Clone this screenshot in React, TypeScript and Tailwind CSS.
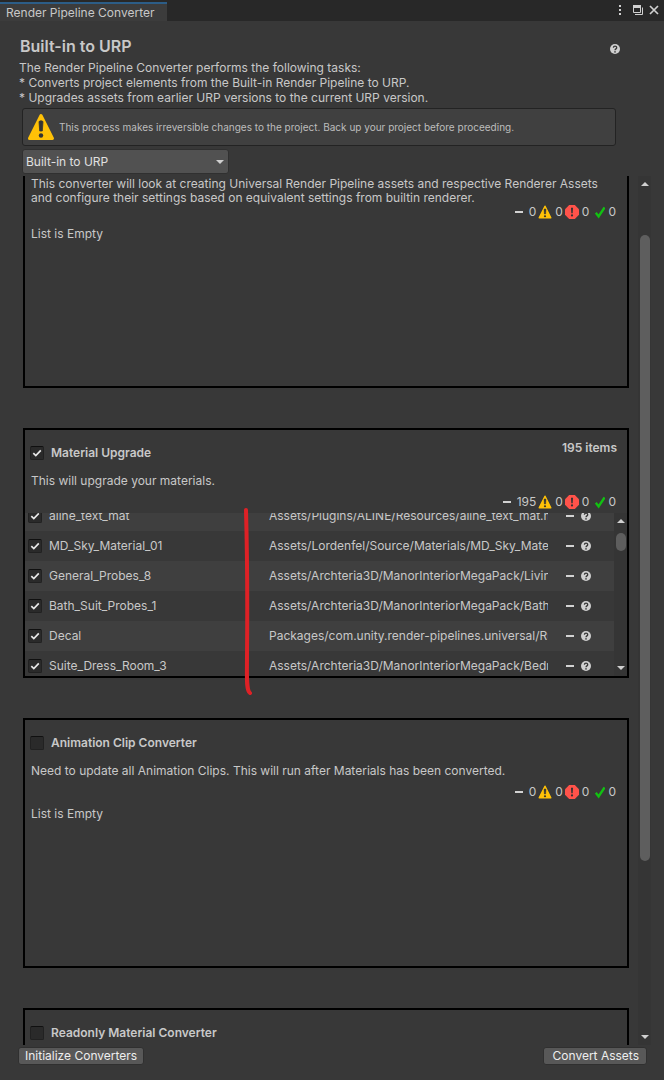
import React, { useLayoutEffect, useRef, useState } from 'react';

interface ConverterItem {
  name: string;
  path: string;
}

const materialItems: ConverterItem[] = [
  { name: 'aline_text_mat', path: 'Assets/Plugins/ALINE/Resources/aline_text_mat.mat' },
  { name: 'MD_Sky_Material_01', path: 'Assets/Lordenfel/Source/Materials/MD_Sky_Material_01.mat' },
  { name: 'General_Probes_8', path: 'Assets/Archteria3D/ManorInteriorMegaPack/Living' },
  { name: 'Bath_Suit_Probes_1', path: 'Assets/Archteria3D/ManorInteriorMegaPack/Bath' },
  { name: 'Decal', path: 'Packages/com.unity.render-pipelines.universal/Runtime' },
  { name: 'Suite_Dress_Room_3', path: 'Assets/Archteria3D/ManorInteriorMegaPack/Bedroom' },
];

const DashIcon = () => (
  <svg viewBox="0 0 14 14" className="size-3.5 shrink-0">
    <rect x="3" y="6" width="8" height="2" fill="#d2d2d2" />
  </svg>
);

const WarningIcon = ({ className }: { className: string }) => (
  <svg viewBox="0 0 28 28" className={className}>
    <path d="M14 2.5 25.5 25.5h-23Z" fill="#ffc107" stroke="#ffc107" strokeWidth="3" strokeLinejoin="round" />
    <path d="M12 8.5q2-1.6 4 0l-.7 9.500h-2.600Z" fill="#333" stroke="#333" strokeWidth=".8" />
    <circle cx="14" cy="22.500" r="2.200" fill="#333" />
  </svg>
);

const ErrorIcon = () => (
  <svg viewBox="0 0 14 14" className="size-3.5 shrink-0">
    <path d="M4.200 0h5.600L14 4.200v5.600L9.800 14H4.200L0 9.800V4.200Z" fill="#ff534a" />
    <path d="M6 2.800h2l-.3 5.400H6.300Z" fill="#333" />
    <circle cx="7" cy="10.400" r="1.100" fill="#333" />
  </svg>
);

const SuccessIcon = () => (
  <svg viewBox="0 0 14 14" className="size-3.5 shrink-0">
    <path d="M4.800 7.800 7.600 11.400 13.600 2.400" fill="none" stroke="#12c012" strokeWidth="2.400" />
  </svg>
);

const HelpIcon = () => (
  <svg viewBox="0 0 10 10" className="size-2.5 shrink-0">
    <circle cx="5" cy="5" r="5" fill="#d0d0d0" />
    <path d="M3.400 3.800C3.400 1.700 6.700 1.700 6.700 3.700 6.700 4.900 5 4.900 5 6.300" fill="none" stroke="#383838" strokeWidth="1.300" />
    <circle cx="5" cy="7.900" r=".8" fill="#383838" />
  </svg>
);

const Arrow = ({ up = false }: { up?: boolean }) => (
  <svg viewBox="0 0 8 4" className="h-1 w-2">
    <path d={up ? 'M0 4 4 0 8 4Z' : 'M0 0h8L4 4Z'} fill="#d0d0d0" />
  </svg>
);

const Checkbox = ({ label, defaultChecked = false }: { label: string; defaultChecked?: boolean }) => {
  const [checked, setChecked] = useState(defaultChecked);
  return (
    <span className="grid size-3.5 shrink-0">
      <input
        type="checkbox"
        aria-label={label}
        checked={checked}
        onChange={(e) => setChecked(e.target.checked)}
        className="col-start-1 row-start-1 size-3.5 appearance-none rounded-xs border border-[#212121] border-t-[#101010] bg-[#2a2a2a]"
      />
      {checked && (
        <svg viewBox="0 0 14 14" className="pointer-events-none col-start-1 row-start-1 size-3.5">
          <path d="M3.300 7.200 5.800 9.600 10.800 4.400" fill="none" stroke="#e8e8e8" strokeWidth="1.700" />
        </svg>
      )}
    </span>
  );
};

const Stats = ({ pending }: { pending: number }) => (
  <div className="mb-1 flex h-3.5 items-center justify-end gap-[2px] pr-[11px]">
    <span className="flex items-center gap-[3px]"><DashIcon />{pending}</span>
    <span className="flex items-center gap-[3px]"><WarningIcon className="size-3.5" />0</span>
    <span className="flex items-center gap-[3px]"><ErrorIcon />0</span>
    <span className="flex items-center gap-[3px]"><SuccessIcon />0</span>
  </div>
);

interface ConverterCardProps {
  title?: string;
  description: string;
  pending?: number;
  count?: string;
  checked?: boolean;
  children?: React.ReactNode;
}

const ConverterCard = ({ title, description, pending = 0, count, checked, children }: ConverterCardProps) => (
  <section className="relative flex h-[250px] shrink-0 flex-col border-2 border-black">
    <div className="flex h-9 items-start justify-between pl-[5px] pr-2.5 pt-[11px] font-semibold">
      {title && (
        <div className="flex items-center gap-[7px] pt-[5px]">
          <Checkbox label={title} defaultChecked={checked} />
          <h2>{title}</h2>
        </div>
      )}
      {count && <span>{count}</span>}
    </div>
    <div className="flex h-[29px] items-center pl-1.5 pr-5">
      <p>{description}</p>
    </div>
    <Stats pending={pending} />
    {children ?? <p className="pl-1.5 pt-1">List is Empty</p>}
  </section>
);

const ItemList = ({ items }: { items: ConverterItem[] }) => {
  const listRef = useRef<HTMLUListElement>(null);

  useLayoutEffect(() => {
    if (listRef.current) listRef.current.scrollTop = 12;
  }, []);

  return (
    <div className="flex min-h-0 flex-1">
      <ul ref={listRef} className="min-w-0 flex-1 overflow-hidden">
        {items.map((item) => (
          <li key={item.name} className="flex h-[30px] items-center pl-[3px] pr-[23px] odd:bg-[#3f3f3f]">
            <Checkbox label={item.name} defaultChecked />
            <span className="ml-[7px] w-[220px] shrink-0">{item.name}</span>
            <span className="min-w-0 flex-1 overflow-hidden whitespace-nowrap">{item.path}</span>
            <span className="ml-[15px] flex items-center gap-1">
              <DashIcon />
              <HelpIcon />
            </span>
          </li>
        ))}
      </ul>
      <div className="flex w-[13px] shrink-0 flex-col items-center bg-[#353535] py-1.5">
        <button type="button" aria-label="Scroll list up"><Arrow up /></button>
        <div className="mt-2.5 h-[18px] w-2.5 rounded-full bg-[#5e5e5e]" />
        <button type="button" aria-label="Scroll list down" className="mt-auto"><Arrow /></button>
      </div>
    </div>
  );
};

const App: React.FC = () => {
  const panelRef = useRef<HTMLDivElement>(null);

  useLayoutEffect(() => {
    if (panelRef.current) panelRef.current.scrollTop = 38;
  }, []);

  return (
    <div className="flex h-screen flex-col overflow-hidden bg-[#383838] font-['Inter',sans-serif] text-[12px] leading-[14px] text-[#c8c8c8]">
      {/* Window tab bar */}
      <div className="flex h-[21px] shrink-0 items-end justify-between bg-[#282828]">
        <div className="flex h-[19px] w-[167px] items-center border-t-2 border-[#2c5d87] bg-[#3c3c3c] pl-1.5">
          Render Pipeline Converter
        </div>
        <div className="flex h-5 items-start gap-1 pr-1">
          <button type="button" aria-label="Menu" className="pr-0.5 pt-[3px]">
            <svg viewBox="0 0 12 12" className="size-3" fill="#d0d0d0">
              <rect x="5" y="1" width="2" height="2" />
              <rect x="5" y="5" width="2" height="2" />
              <rect x="5" y="9" width="2" height="2" />
            </svg>
          </button>
          <button type="button" aria-label="Maximize" className="pt-[3px]">
            <svg viewBox="0 0 12 12" className="size-3" fill="none" stroke="#d0d0d0">
              <path d="M1.500 1.500h7v7h-7Z" />
              <path d="M1 2.500h8" strokeWidth="3" />
              <path d="M10.500 3.500v7H3" />
            </svg>
          </button>
          <button type="button" aria-label="Close" className="pt-[3px]">
            <svg viewBox="0 0 12 12" className="size-3" fill="none" stroke="#d0d0d0" strokeWidth="1.700">
              <path d="M2 2l8 8M10 2l-8 8" />
            </svg>
          </button>
        </div>
      </div>

      {/* Intro */}
      <header className="shrink-0 pl-[19px] pr-11 pt-4">
        <div className="flex items-center justify-between">
          <h1 className="pl-px text-[16px] font-semibold leading-[18px]">Built-in to URP</h1>
          <button type="button" aria-label="Help" className="pt-1.5"><HelpIcon /></button>
        </div>
        <div className="mt-[5px] leading-[15px]">
          <p>The Render Pipeline Converter performs the following tasks:</p>
          <p>* Converts project elements from the Built-in Render Pipeline to URP.</p>
          <p>* Upgrades assets from earlier URP versions to the current URP version.</p>
        </div>
      </header>

      <div className="ml-[22px] mr-12 mt-[3px] flex h-[38px] shrink-0 items-center gap-1 rounded-[3px] border border-[#232323] bg-[#404040] pl-1 text-[10px] text-[#bdbdbd]">
        <WarningIcon className="size-7 shrink-0" />
        <p>This process makes irreversible changes to the project. Back up your project before proceeding.</p>
      </div>

      <div className="ml-[22px] mt-[3px] grid w-[207px] shrink-0 items-center">
        <select
          aria-label="Conversion"
          className="col-start-1 row-start-1 h-[25px] w-full appearance-none rounded-[3px] border border-[#303030] bg-[#515151] pl-[3px] text-[#e0e0e0]"
        >
          <option>Built-in to URP</option>
        </select>
        <span className="pointer-events-none col-start-1 row-start-1 justify-self-end pr-[5px]"><Arrow /></span>
      </div>

      {/* Converters */}
      <main className="mt-[2px] flex min-h-0 flex-1 pl-[23px] pr-[13px]">
        <div ref={panelRef} className="flex min-w-0 flex-1 flex-col gap-10 overflow-hidden">
          <ConverterCard description="This converter will look at creating Universal Render Pipeline assets and respective Renderer Assets and configure their settings based on equivalent settings from builtin renderer." />
          <ConverterCard
            title="Material Upgrade"
            description="This will upgrade your materials."
            pending={195}
            count="195 items"
            checked
          >
            <ItemList items={materialItems} />
            <svg viewBox="0 0 10 190" className="pointer-events-none absolute left-[218px] top-[76px] h-[190px] w-2.5">
              <path
                d="M3 4C4 40 4.500 100 4 150 4 172 3 184 7 187"
                fill="none"
                stroke="#de2126"
                strokeWidth="4"
                strokeLinecap="round"
              />
            </svg>
          </ConverterCard>
          <ConverterCard
            title="Animation Clip Converter"
            description="Need to update all Animation Clips. This will run after Materials has been converted."
          />
          <ConverterCard title="Readonly Material Converter" description="" />
        </div>
        <div className="ml-[9px] flex w-[13px] shrink-0 flex-col items-center bg-[#353535] py-1.5">
          <button type="button" aria-label="Scroll up"><Arrow up /></button>
          <div className="flex w-2.5 flex-1 flex-col">
            <div className="flex-[49]" />
            <div className="flex-[625] rounded-full bg-[#5e5e5e]" />
            <div className="flex-[174]" />
          </div>
          <button type="button" aria-label="Scroll down"><Arrow /></button>
        </div>
      </main>

      <footer className="mb-[15px] mt-[2px] flex shrink-0 justify-between pl-[18px] pr-[17px]">
        <button type="button" className="h-[18px] rounded-[3px] border border-[#303030] bg-[#585858] px-1.5 text-[#eee]">
          Initialize Converters
        </button>
        <button type="button" className="h-[18px] rounded-[3px] border border-[#303030] bg-[#585858] pl-[9px] pr-[7px] text-[#eee]">
          Convert Assets
        </button>
      </footer>
    </div>
  );
};

export default App;
